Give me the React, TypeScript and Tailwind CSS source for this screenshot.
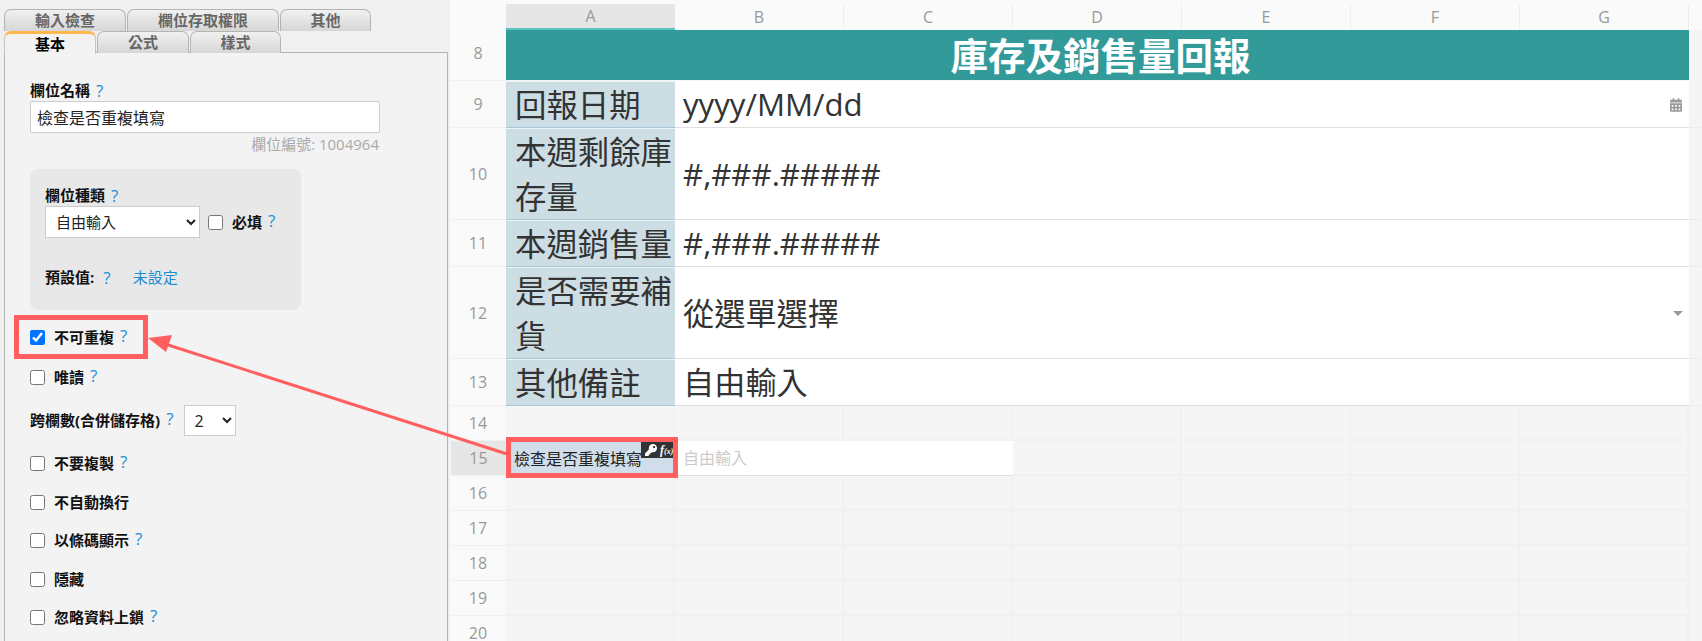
import React from "react";
import { FaCalendarAlt, FaKey } from "react-icons/fa";

const FONT = "font-['Open_Sans','Noto_Sans_CJK_TC',sans-serif]";
const ROW_GRID = "grid grid-cols-[56px_169px_169px_169px_169px_169px_169px_169px_1fr]";
const COLUMNS = ["A", "B", "C", "D", "E", "F", "G"];

const Help = ({ className = "" }: { className?: string }) => (
  <span className={`text-[17px] font-normal text-[#1a90d8] leading-none ${className}`}>?</span>
);

const Tab = ({ label, width, active }: { label: string; width: string; active?: boolean }) => (
  <div
    className={`${width} h-[22px] rounded-t-[7px] border border-b-0 text-center text-[15px] font-bold leading-[20px] ${
      active
        ? "relative z-10 h-[23px] border-[#c4c4c4] border-t-[3px] border-t-[#ffb84d] bg-[#f2f2f2] leading-[17px] text-black"
        : "border-[#b4b4b4] bg-gradient-to-b from-[#f1f1f1] to-[#d6d6d6] text-[#666]"
    }`}
  >
    {label}
  </div>
);

const CheckRow = ({
  label,
  checked,
  help = true,
  className,
}: {
  label: string;
  checked?: boolean;
  help?: boolean;
  className: string;
}) => (
  <div className={`flex h-[20px] items-center ${className}`}>
    <input type="checkbox" defaultChecked={checked} className="m-0 h-[15px] w-[15px] accent-[#0075ff]" />
    <span className="ml-[9px] text-[15px] font-bold text-[#111]">{label}</span>
    {help && <Help className="relative -top-[2px] ml-[6px]" />}
  </div>
);

const SidePanel = () => (
  <aside className="w-[450px] shrink-0 bg-[#f0f0f0] pt-[9px]">
    <div className="ml-[4px] flex h-[22px] gap-[1px]">
      <Tab label="輸入檢查" width="w-[122px]" />
      <Tab label="欄位存取權限" width="w-[152px]" />
      <Tab label="其他" width="w-[91px]" />
    </div>
    <div className="-mb-px ml-[4px] flex h-[22px] gap-[1px]">
      <Tab label="基本" width="w-[92px]" active />
      <Tab label="公式" width="w-[92px]" />
      <Tab label="樣式" width="w-[91px]" />
    </div>
    <div className="ml-[4px] mr-[2px] h-[600px] border border-[#b4b4b4] bg-[#f3f3f3] pl-[25px] pt-[27px]">
      <div className="flex h-[20px] items-center text-[15px] font-bold text-[#111]">
        欄位名稱
        <Help className="ml-[6px]" />
      </div>
      <input
        readOnly
        value="檢查是否重複填寫"
        className="mt-[1px] block h-[32px] w-[350px] rounded-[2px] border border-[#ccc] bg-white pl-[6px] text-[16px] text-[#222] outline-none"
      />
      <div className="mt-[1px] h-[20px] w-[350px] pr-[1px] text-right text-[15px] leading-[20px] text-[#aaa]">
        欄位編號: 1004964
      </div>
      <div className="mt-[15px] h-[141px] w-[271px] rounded-[8px] bg-[#e8e8e8] px-[15px] pt-[16px]">
        <div className="flex h-[20px] items-center text-[15px] font-bold text-[#111]">
          欄位種類
          <Help className="ml-[6px]" />
        </div>
        <div className="mt-[1px] flex h-[32px] items-center">
          <select className="h-[32px] w-[155px] border border-[#ccc] bg-white pl-[6px] text-[15px] text-[#222]">
            <option>自由輸入</option>
          </select>
          <input type="checkbox" className="m-0 ml-[8px] h-[15px] w-[15px] accent-[#0075ff]" />
          <span className="ml-[9px] text-[15px] font-bold text-[#111]">必填</span>
          <Help className="relative -top-[2px] ml-[6px]" />
        </div>
        <div className="mt-[29px] flex h-[20px] items-center text-[15px] font-bold text-[#111]">
          預設值:
          <Help className="ml-[9px]" />
          <span className="ml-[22px] font-normal text-[#1a8ccf]">未設定</span>
        </div>
      </div>
      <CheckRow label="不可重複" checked className="mt-[17px]" />
      <CheckRow label="唯讀" className="mt-[20px]" />
      <div className="mt-[18px] flex h-[31px] items-center text-[15px] font-bold text-[#111]">
        跨欄數(合併儲存格)
        <Help className="relative -top-[2px] ml-[6px]" />
        <select className="ml-[10px] h-[31px] w-[52px] border border-[#ccc] bg-white pl-[6px] text-[16px] font-normal text-[#222]">
          <option>2</option>
        </select>
      </div>
      <CheckRow label="不要複製" className="mt-[17px]" />
      <CheckRow label="不自動換行" help={false} className="mt-[19px]" />
      <CheckRow label="以條碼顯示" className="mt-[18px]" />
      <CheckRow label="隱藏" help={false} className="mt-[19px]" />
      <CheckRow label="忽略資料上鎖" className="mt-[18px]" />
    </div>
  </aside>
);

const RowNumber = ({ n, active, className = "" }: { n: number; active?: boolean; className?: string }) => (
  <div
    className={`flex items-center justify-center border-b border-[#f0f0f0] text-[16px] text-[#999] ${
      active ? "ml-[1px] bg-[#e6e6e6]" : "bg-[#fafafa]"
    } ${className}`}
  >
    {n}
  </div>
);

const FormRow = ({
  n,
  height,
  label,
  children,
}: {
  n: number;
  height: string;
  label: string;
  children: React.ReactNode;
}) => (
  <div className={`${ROW_GRID} ${height} grid-rows-1`}>
    <RowNumber n={n} />
    <div className="flex items-center border-y border-t-[#eef3f5] border-b-[#a9c7d8] bg-[#cddde4] pl-[9px] text-[31.4px] leading-[45px] text-[#333]">
      <span>{label}</span>
    </div>
    <div className="relative col-span-6 flex items-center border-b border-[#e0e0e0] bg-white pl-[8px] text-[31.2px] leading-[40px] text-[#333]">
      {children}
    </div>
    <div className="border-b border-[#eeeeee] bg-[#f5f5f5]" />
  </div>
);

const EmptyRow = ({ n }: { n: number }) => (
  <div className={`${ROW_GRID} h-[35px]`}>
    <RowNumber n={n} />
    {COLUMNS.map((c) => (
      <div key={c} className="border-b-2 border-r-2 border-[#f1f1f1] bg-[#f5f5f5]" />
    ))}
    <div className="bg-[#f5f5f5]" />
  </div>
);

const Sheet = () => (
  <main className="flex-1 bg-[#f5f5f5]">
    <div className={`${ROW_GRID} h-[30px] bg-[#fafafa]`}>
      <div />
      {COLUMNS.map((c, i) => (
        <div key={c} className="pt-[4px]">
          <div
            className={`flex h-[26px] items-center justify-center text-[16px] text-[#999] ${
              i === 0 ? "border-b-2 border-[#5cc4c0] bg-[#e6e6e6]" : "border-r border-[#eeeeee]"
            }`}
          >
            {c}
          </div>
        </div>
      ))}
      <div />
    </div>

    <div className={`${ROW_GRID} h-[51px]`}>
      <RowNumber n={8} className="pb-[5px]" />
      <div className="col-span-7 mb-[1px] flex items-center justify-center bg-[#339a9a] pl-[6px] pt-[2px] text-[37.5px] font-bold leading-[44px] text-white">
        庫存及銷售量回報
      </div>
      <div className="bg-[#f5f5f5]" />
    </div>

    <FormRow n={9} height="h-[47px]" label="回報日期">
      <span>yyyy/MM/dd</span>
      <FaCalendarAlt className="absolute right-[7px] top-[17px] h-[14px] w-[12px] text-[#999]" />
    </FormRow>
    <FormRow n={10} height="h-[92px]" label="本週剩餘庫存量">
      <span>#,###.#####</span>
    </FormRow>
    <FormRow n={11} height="h-[47px]" label="本週銷售量">
      <span>#,###.#####</span>
    </FormRow>
    <FormRow n={12} height="h-[92px]" label="是否需要補貨">
      <span>從選單選擇</span>
      <div className="absolute right-[6px] top-[44px] h-0 w-0 border-x-[5px] border-t-[5px] border-x-transparent border-t-[#999]" />
    </FormRow>
    <FormRow n={13} height="h-[47px]" label="其他備註">
      <span>自由輸入</span>
    </FormRow>

    <EmptyRow n={14} />

    <div className={`${ROW_GRID} h-[35px]`}>
      <RowNumber n={15} active />
      <div className="relative flex items-center bg-[#d0deec] pl-[8px] text-[16px] text-[#222]">
        檢查是否重複填寫
        <div className="absolute right-[1px] top-[1px] flex h-[16px] w-[33px] items-center gap-[3px] bg-[#333] pl-[4px] text-white">
          <FaKey className="h-[12px] w-[12px] shrink-0" />
          <span className="font-['Liberation_Serif',serif] text-[12px] font-bold italic leading-none">
            f<span className="text-[8px]">(x)</span>
          </span>
        </div>
        <div className="absolute bottom-0 right-0 h-[3px] w-[3px] bg-black" />
      </div>
      <div className="col-span-2 flex items-center border-b border-[#e0e0e0] bg-white pl-[8px] text-[16px] text-[#ccc]">
        自由輸入
      </div>
      {COLUMNS.slice(3).map((c) => (
        <div key={c} className="border-b-2 border-r-2 border-[#f1f1f1] bg-[#f5f5f5]" />
      ))}
      <div className="bg-[#f5f5f5]" />
    </div>

    {[16, 17, 18, 19, 20].map((n) => (
      <EmptyRow key={n} n={n} />
    ))}
  </main>
);

export default function App() {
  return (
    <div className={`relative flex h-[641px] w-[1702px] overflow-hidden ${FONT}`}>
      <SidePanel />
      <Sheet />

      {/* annotations */}
      <div className="pointer-events-none absolute left-[14px] top-[315px] h-[44px] w-[134px] border-[5px] border-[#ff5f5f]" />
      <div className="pointer-events-none absolute left-[506px] top-[437px] h-[41px] w-[172px] border-[5px] border-[#ff5f5f]" />
      <svg className="pointer-events-none absolute left-0 top-0" width="1702" height="641">
        <line x1="162" y1="343" x2="507" y2="454" stroke="#ff5f5f" strokeWidth="3" />
        <polygon points="148,338 172,335 166,352" fill="#ff5f5f" />
      </svg>
    </div>
  );
}
